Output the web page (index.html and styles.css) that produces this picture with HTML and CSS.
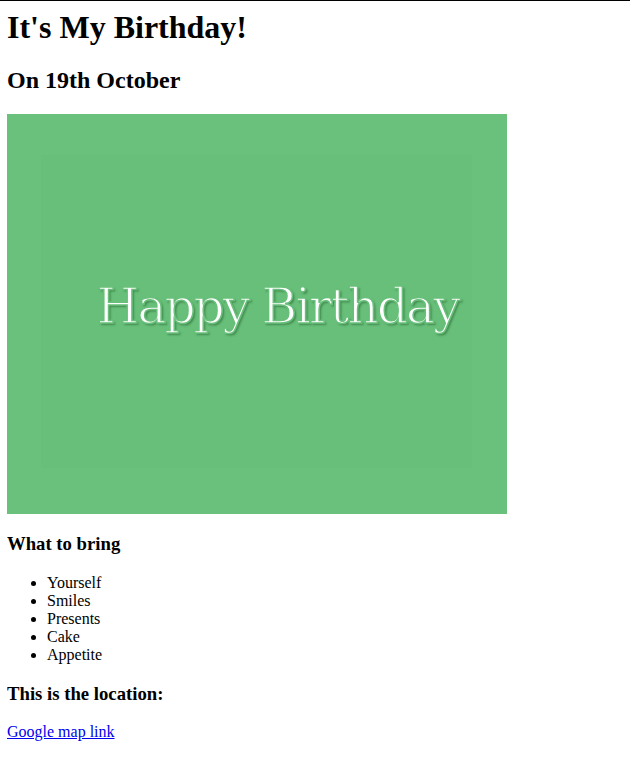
FILE: index.html
```html
<!DOCTYPE html>
<html lang="en">
<head>
<meta charset="utf-8">
<title>It's My Birthday!</title>
<link rel="stylesheet" href="styles.css">
</head>
<body>
<h1 class="title">It's My Birthday!</h1>
<h2 class="date">On 19th October</h2>
<div class="card">
  <div class="card-inner">
    <span class="card-text">Happy Birthday</span>
  </div>
</div>
<h3 class="section">What to bring</h3>
<ul class="items">
  <li>Yourself</li>
  <li>Smiles</li>
  <li>Presents</li>
  <li>Cake</li>
  <li>Appetite</li>
</ul>
<h3 class="section">This is the location:</h3>
<p class="location"><a class="map-link" href="#">Google map link</a></p>
</body>
</html>
```
FILE: styles.css
```css
html {
  border-top: 1px solid #000;
}
body {
  margin: 8px 8px 8px 7px;
  font-family: "Liberation Serif", serif;
  font-size: 16px;
  color: #000;
  background: #fff;
}
.title {
  font-size: 32px;
  margin: 0 0 21.44px;
}
.date {
  font-size: 24px;
  margin: 19.92px 0;
}
.card {
  width: 500px;
  height: 400px;
  background: #6ac17b;
  box-sizing: border-box;
  padding: 41px 35px 46px 34px;
}
.card-inner {
  height: 100%;
  background: #67bf79;
  display: flex;
  align-items: center;
  justify-content: center;
  padding-left: 42px;
  box-sizing: border-box;
}
.card-text {
  font-family: "DejaVu Serif", serif;
  font-size: 49px;
  letter-spacing: -2.2px;
  color: #fff;
  -webkit-text-stroke: 1.6px #67bf79;
  text-shadow: 2px 2px 2px rgba(40, 100, 50, 0.55);
  white-space: nowrap;
  margin-top: -10px;
}
.section {
  font-size: 18.72px;
  margin: 18.72px 0;
}
.items {
  margin: 16px 0;
  padding-left: 40px;
}
.location {
  margin: 16px 0;
}
.map-link {
  color: #0000ee;
}
```
